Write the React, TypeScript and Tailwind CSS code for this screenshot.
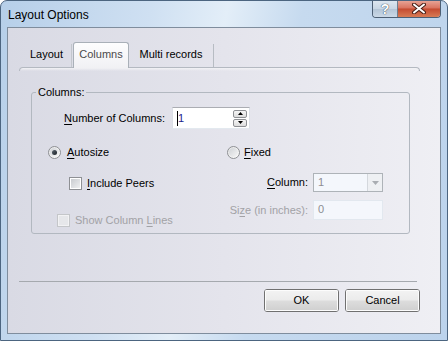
import React from "react";

const font = "font-['Liberation_Sans',Tahoma,Arial,sans-serif]";

function Radio({ checked }: { checked?: boolean }) {
  return (
    <span className="flex h-[13px] w-[13px] items-center justify-center rounded-full border border-[#8e9094] bg-gradient-to-br from-[#e6e6e6] to-[#fbfbfb]">
      <span className="flex h-[9px] w-[9px] items-center justify-center rounded-full bg-gradient-to-br from-[#d0d3d7] to-[#f6f6f6]">
        {checked && <span className="h-[5px] w-[5px] rounded-full bg-gradient-to-br from-[#5c6670] to-[#1c2228]" />}
      </span>
    </span>
  );
}

function Check({ disabled }: { disabled?: boolean }) {
  return (
    <span
      className={`flex h-[13px] w-[13px] items-center justify-center border ${
        disabled ? "border-[#c4c6c9] bg-[#f2f2f4]" : "border-[#8e9094] bg-white"
      }`}
    >
      <span
        className={`h-[9px] w-[9px] ${
          disabled ? "bg-[#e6e7ea]" : "bg-gradient-to-br from-[#c9ccd0] to-[#eff0f1]"
        }`}
      />
    </span>
  );
}

function Btn({ label }: { label: string }) {
  return (
    <button className="flex h-[23px] w-[75px] flex-col overflow-hidden rounded-[3px] border border-[#707070] p-0 text-[11px] text-black">
      <span className="relative flex h-full w-full items-center justify-center bg-[linear-gradient(to_bottom,#f3f3f3_0%,#ebebeb_48%,#dddddd_52%,#cfcfcf_100%)] shadow-[inset_0_0_0_1px_#fcfcfc]">
        {label}
      </span>
    </button>
  );
}

export default function App() {
  return (
    <div className={`${font} flex h-[341px] w-[448px] flex-col overflow-hidden rounded-t-[7px] border border-[#4c6580] bg-[linear-gradient(100deg,#b6cfe9_0%,#cfe0f2_30%,#e3eef8_45%,#c6daef_60%,#bcd3ec_100%)] text-black`}>
      {/* title bar */}
      <div className="flex h-[26px] items-start justify-between">
        <span className="pl-[7px] pt-[7px] text-[12px] leading-[14px]">Layout Options</span>
        <div className="mr-[6px] flex h-[18px] -mt-px overflow-hidden rounded-b-[4px] border border-t-0 border-[#4d5f74]">
          <span className="flex w-[25px] items-center justify-center border-r border-[#6e7e8f] bg-[linear-gradient(to_bottom,#dfe8f1_0%,#c9d7e5_50%,#b3c4d6_52%,#cbd9e7_100%)] text-[14px] font-bold leading-none text-white [text-shadow:0_0_1px_#39495a,0_0_1px_#39495a]">
            ?
          </span>
          <span className="flex w-[42px] items-center justify-center bg-[linear-gradient(to_bottom,#e9a99c_0%,#d9725e_48%,#c44a30_52%,#d87b55_100%)]">
            <svg width="14" height="11" viewBox="0 0 14 11">
              <path d="M2 1.5 L12 9.5 M12 1.5 L2 9.5" stroke="#4a2018" strokeWidth="4" strokeLinecap="round" />
              <path d="M2 1.5 L12 9.5 M12 1.5 L2 9.5" stroke="#ffffff" strokeWidth="2" strokeLinecap="round" />
            </svg>
          </span>
        </div>
      </div>

      {/* client + side frames */}
      <div className="flex flex-1 px-[6px] pb-[6px]">
        <div className="flex h-[307px] w-[434px] flex-col border border-[#7f8d9d] bg-gradient-to-r from-[#d9dae4] via-[#e4e4ec] to-[#efeff4] pl-[11px] pt-[14px] text-[11px] leading-[13px]">
          {/* tabs */}
          <div className="relative z-10 flex h-[25px] items-end">
            <div className="flex h-[23px] w-[53px] items-center justify-center border-r border-[#c3c7cd] pb-[2px] pl-[3px]">
              Layout
            </div>
            <div className="-mb-px ml-px flex h-[26px] w-[56px] items-center justify-center rounded-t-[3px] border border-b-0 border-[#a9b0b8] bg-gradient-to-b from-[#fdfdfe] to-[#f1f1f4] pb-[2px] text-[#4a4a4a]">
              Columns
            </div>
            <div className="flex h-[23px] w-[85px] items-center justify-center border-r border-[#b7bcc3] pb-[2px]">
              Multi records
            </div>
          </div>
          <div className="h-[4px] w-[401px] rounded-t-[4px] border-x border-t border-[#b4b9c1] bg-gradient-to-b from-[#f2f2f5] to-transparent" />

          {/* group box */}
          <fieldset className="ml-[12px] mt-[15px] w-[379px] rounded-[3px] border border-[#b2b8c0] pb-[6px]">
            <legend className="ml-[4px] px-[2px] leading-[13px]">Columns:</legend>

            <div className="mt-[8px] flex h-[22px] items-center">
              <span className="w-[133px] whitespace-nowrap text-right">
                <u className="underline-offset-2">N</u>umber of Columns:
              </span>
              <div className="ml-[7px] flex h-[22px] w-[78px] items-center border border-[#abadb3] border-b-[#e3e9ef] border-x-[#dbdfe6] bg-white pl-[4px] pr-[2px]">
                <span className="h-[15px] w-px bg-black" />
                <span className="flex-1 text-[#1c1c8c]">1</span>
                <div className="flex flex-col gap-px">
                  <span className="flex h-[8px] w-[14px] items-center justify-center rounded-[2px] border border-[#8e9094] bg-gradient-to-b from-[#f6f6f6] to-[#dcdcdc]">
                    <svg width="5" height="3" viewBox="0 0 5 3"><path d="M2.5 0 L5 3 L0 3 Z" fill="#000" /></svg>
                  </span>
                  <span className="flex h-[8px] w-[14px] items-center justify-center rounded-[2px] border border-[#8e9094] bg-gradient-to-b from-[#f6f6f6] to-[#dcdcdc]">
                    <svg width="5" height="3" viewBox="0 0 5 3"><path d="M0 0 L5 0 L2.5 3 Z" fill="#000" /></svg>
                  </span>
                </div>
              </div>
            </div>

            <div className="mt-[17px] flex h-[13px] items-center">
              <div className="ml-[16px] flex w-[179px] items-center gap-[6px]">
                <Radio checked />
                <span>
                  <u className="underline-offset-2">A</u>utosize
                </span>
              </div>
              <div className="flex items-center gap-[4px]">
                <Radio />
                <span>
                  <u className="underline-offset-2">F</u>ixed
                </span>
              </div>
            </div>

            <div className="mt-[14px] flex">
              <div className="flex w-[180px] flex-col">
                <div className="ml-[37px] mt-[4px] flex h-[13px] items-center gap-[5px]">
                  <Check />
                  <span className="whitespace-nowrap">
                    <u className="underline-offset-2">I</u>nclude Peers
                  </span>
                </div>
                <div className="ml-[25px] mt-[24px] flex h-[13px] items-center gap-[5px] text-[#a2a2a6]">
                  <Check disabled />
                  <span className="whitespace-nowrap">
                    Show Column <u className="underline-offset-2">L</u>ines
                  </span>
                </div>
              </div>
              <div className="flex flex-col">
                <div className="flex h-[19px] items-center">
                  <span className="w-[96px] whitespace-nowrap text-right">
                    <u className="underline-offset-2">C</u>olumn:
                  </span>
                  <div className="ml-[5px] flex h-[19px] w-[70px] border border-[#aeb3b8] bg-[#f4f7fc]">
                    <span className="flex-1 pl-[4px] pt-[2px] text-[#8d8d92]">1</span>
                    <span className="flex w-[15px] items-center justify-center border-l border-[#d4d8dd] bg-[#eef0f3]">
                      <svg width="7" height="4" viewBox="0 0 7 4"><path d="M0 0 L7 0 L3.5 4 Z" fill="#a9adb2" /></svg>
                    </span>
                  </div>
                </div>
                <div className="mt-[8px] flex h-[20px] items-center">
                  <span className="w-[96px] whitespace-nowrap text-right text-[#a2a2a6]">
                    Si<u className="underline-offset-2">z</u>e (in inches):
                  </span>
                  <div className="ml-[5px] flex h-[20px] w-[70px] items-start border border-[#e2e8ef] bg-[#f4f7fc] pl-[4px] pt-[2px] text-[#8d8d92]">
                    0
                  </div>
                </div>
              </div>
            </div>
          </fieldset>

          {/* separator */}
          <div className="mt-[47px] h-px w-[398px] bg-[#a5a9ae]" />

          {/* buttons */}
          <div className="mt-[7px] flex w-[401px] justify-end gap-[6px]">
            <Btn label="OK" />
            <Btn label="Cancel" />
          </div>
        </div>
      </div>
    </div>
  );
}
